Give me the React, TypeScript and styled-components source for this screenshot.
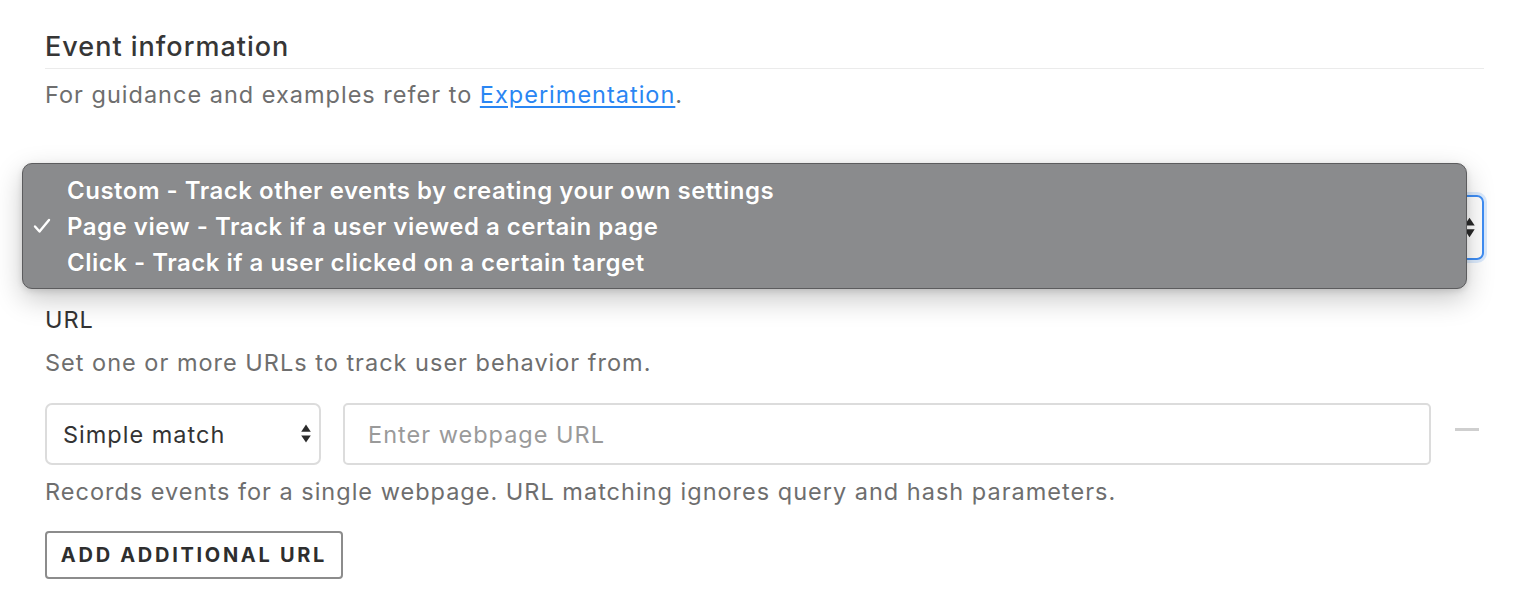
import React from "react";
import styled, { createGlobalStyle } from "styled-components";

const Global = createGlobalStyle`
  html, body { margin: 0; padding: 0; background: #ffffff; }
  body { font-family: Inter, "Noto Sans", "Liberation Sans", sans-serif; -webkit-font-smoothing: antialiased; }
  * { box-sizing: border-box; }
`;

const Page = styled.div`
  padding: 32px 32px 0 45px;
  width: 1516px;
  height: 600px;
  overflow: hidden;
`;

const SectionTitle = styled.h2`
  margin: 0;
  padding-bottom: 6px;
  border-bottom: 1px solid #ebebeb;
  font-size: 27px;
  line-height: 30px;
  font-weight: 500;
  letter-spacing: 1px;
  color: #363636;
`;

const Text = styled.p<{ $mt: number; $color?: string }>`
  margin: ${(p) => p.$mt}px 0 0;
  font-size: 23.5px;
  line-height: 30px;
  letter-spacing: 1px;
  color: ${(p) => p.$color || "#6e6e6e"};
`;

const Link = styled.a`
  color: #2a86f3;
  text-decoration: underline;
  text-underline-offset: 3px;
`;

const Field = styled.div`
  position: relative;
  margin-top: 85px;
`;

const FocusSelect = styled.div`
  height: 65px;
  border: 2px solid #3f8ef5;
  border-radius: 7px;
  box-shadow: 0 0 0 3px rgba(63, 142, 245, 0.18);
  display: flex;
  align-items: center;
  justify-content: flex-end;
  padding-right: 6px;
`;

const Arrows = styled.svg`
  display: block;
`;

const Menu = styled.div`
  position: absolute;
  top: -32px;
  left: -23px;
  right: 17px;
  height: 126px;
  background: #8a8b8d;
  border: 1px solid #5c5c5e;
  border-radius: 10px;
  padding: 8px 0 10px;
  box-shadow: 0 10px 28px rgba(0, 0, 0, 0.22), 0 2px 6px rgba(0, 0, 0, 0.12);
`;

const MenuItem = styled.div`
  display: flex;
  align-items: center;
  height: 36px;
  font-size: 24px;
  font-weight: 600;
  letter-spacing: 0.5px;
  color: #ffffff;
  text-shadow: 0 0 1px rgba(0, 0, 0, 0.15);
`;

const CheckCol = styled.span`
  width: 44px;
  display: flex;
  justify-content: flex-start;
  padding-left: 10px;
`;

const Row = styled.div`
  display: flex;
  align-items: center;
  margin-top: 25px;
`;

const SelectBox = styled.div`
  width: 276px;
  height: 62px;
  border: 2px solid #dcdcdc;
  border-radius: 7px;
  display: flex;
  align-items: center;
  justify-content: space-between;
  padding: 0 7px 0 16px;
  font-size: 23.5px;
  letter-spacing: 1px;
  color: #333;
`;

const Input = styled.div`
  margin-left: 22px;
  width: 1088px;
  height: 62px;
  border: 2px solid #dcdcdc;
  border-radius: 5px;
  display: flex;
  align-items: center;
  padding-left: 23px;
  font-size: 23.5px;
  letter-spacing: 1px;
  color: #9a9a9a;
`;

const Minus = styled.span`
  margin-left: 24px;
  width: 24px;
  height: 3px;
  background: #cfcfcf;
  margin-top: -10px;
`;

const Button = styled.button`
  margin-top: 24px;
  width: 298px;
  height: 48px;
  border: 2px solid #8c8c8c;
  border-radius: 4px;
  background: #fff;
  font-family: inherit;
  font-size: 20px;
  font-weight: 700;
  letter-spacing: 2.7px;
  color: #2e2e2e;
  padding: 0;
`;

const UpDown = ({ size = 14 }: { size?: number }) => (
  <Arrows width={size} height={size * 1.6} viewBox="0 0 10 16">
    <path d="M5 0.5 L9 6.5 H1 Z" fill="#2b2b2b" />
    <path d="M5 15.5 L9 9.5 H1 Z" fill="#2b2b2b" />
  </Arrows>
);

export default function App() {
  return (
    <>
      <Global />
      <Page>
        <SectionTitle>Event information</SectionTitle>
        <Text $mt={11}>
          For guidance and examples refer to <Link href="#">Experimentation</Link>.
        </Text>
        <Field>
          <FocusSelect>
            <UpDown size={13} />
          </FocusSelect>
          <Menu>
            <MenuItem>
              <CheckCol />
              Custom - Track other events by creating your own settings
            </MenuItem>
            <MenuItem>
              <CheckCol>
                <svg width="18" height="16" viewBox="0 0 18 16">
                  <path d="M2 8.5 L6.5 13.5 L16 2" fill="none" stroke="#fff" strokeWidth="2.4" strokeLinecap="round" strokeLinejoin="round" />
                </svg>
              </CheckCol>
              Page view - Track if a user viewed a certain page
            </MenuItem>
            <MenuItem>
              <CheckCol />
              Click - Track if a user clicked on a certain target
            </MenuItem>
          </Menu>
        </Field>
        <Text $mt={45} $color="#333">URL</Text>
        <Text $mt={13}>Set one or more URLs to track user behavior from.</Text>
        <Row>
          <SelectBox>
            Simple match
            <UpDown size={12} />
          </SelectBox>
          <Input>Enter webpage URL</Input>
          <Minus />
        </Row>
        <Text $mt={12}>Records events for a single webpage. URL matching ignores query and hash parameters.</Text>
        <Button>ADD ADDITIONAL URL</Button>
      </Page>
    </>
  );
}
